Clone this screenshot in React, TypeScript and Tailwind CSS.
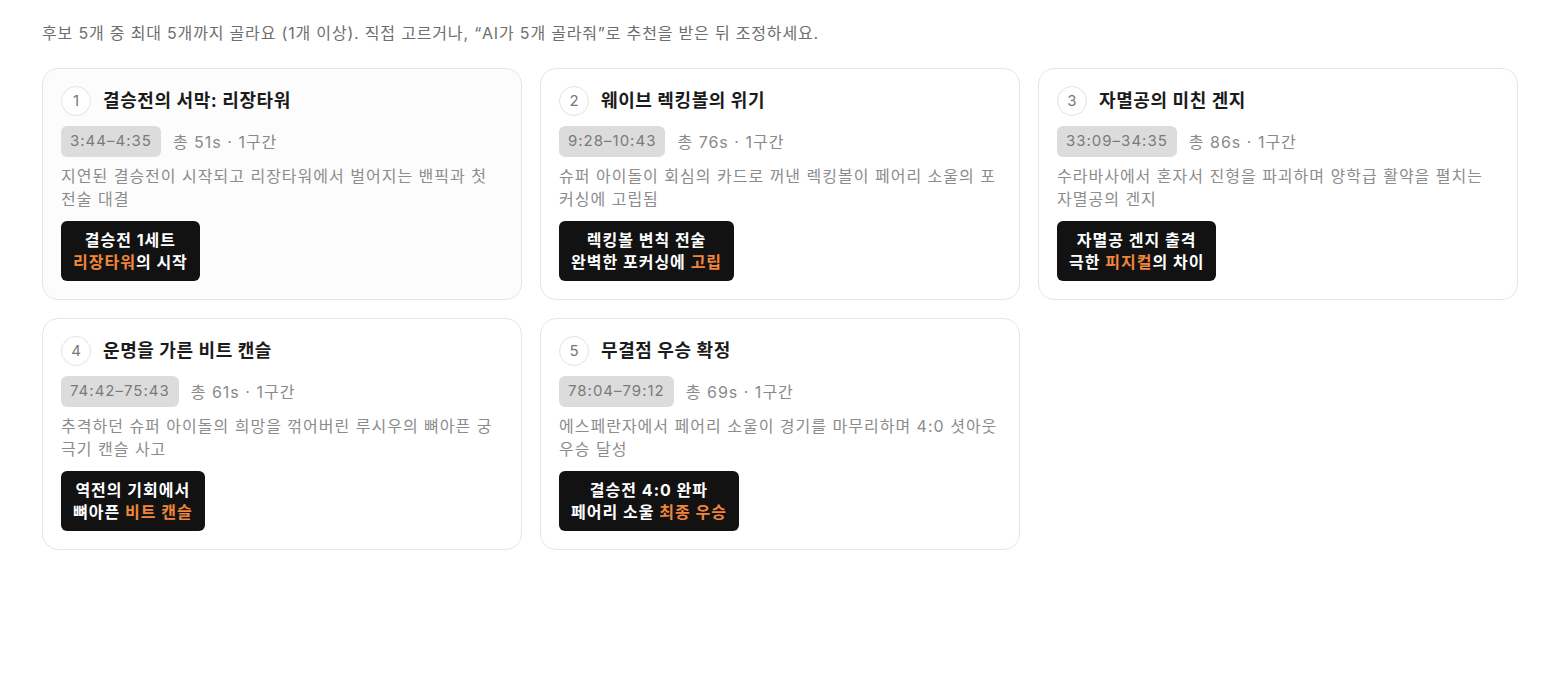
import React from "react";

type Item = {
  n: number;
  title: string;
  time: string;
  meta: string;
  desc: string;
  line1: React.ReactNode;
  line2: React.ReactNode;
  selected?: boolean;
};

const O = ({ children }: { children: React.ReactNode }) => (
  <span className="text-[#f0863c]">{children}</span>
);

const items: Item[] = [
  {
    n: 1,
    title: "결승전의 서막: 리장타워",
    time: "3:44–4:35",
    meta: "총 51s · 1구간",
    desc: "지연된 결승전이 시작되고 리장타워에서 벌어지는 밴픽과 첫 전술 대결",
    line1: "결승전 1세트",
    line2: (
      <>
        <O>리장타워</O>의 시작
      </>
    ),
    selected: true,
  },
  {
    n: 2,
    title: "웨이브 렉킹볼의 위기",
    time: "9:28–10:43",
    meta: "총 76s · 1구간",
    desc: "슈퍼 아이돌이 회심의 카드로 꺼낸 렉킹볼이 페어리 소울의 포커싱에 고립됨",
    line1: "렉킹볼 변칙 전술",
    line2: (
      <>
        완벽한 포커싱에 <O>고립</O>
      </>
    ),
  },
  {
    n: 3,
    title: "자멸공의 미친 겐지",
    time: "33:09–34:35",
    meta: "총 86s · 1구간",
    desc: "수라바사에서 혼자서 진형을 파괴하며 양학급 활약을 펼치는 자멸공의 겐지",
    line1: "자멸공 겐지 출격",
    line2: (
      <>
        극한 <O>피지컬</O>의 차이
      </>
    ),
  },
  {
    n: 4,
    title: "운명을 가른 비트 캔슬",
    time: "74:42–75:43",
    meta: "총 61s · 1구간",
    desc: "추격하던 슈퍼 아이돌의 희망을 꺾어버린 루시우의 뼈아픈 궁극기 캔슬 사고",
    line1: "역전의 기회에서",
    line2: (
      <>
        뼈아픈 <O>비트 캔슬</O>
      </>
    ),
  },
  {
    n: 5,
    title: "무결점 우승 확정",
    time: "78:04–79:12",
    meta: "총 69s · 1구간",
    desc: "에스페란자에서 페어리 소울이 경기를 마무리하며 4:0 셧아웃 우승 달성",
    line1: "결승전 4:0 완파",
    line2: (
      <>
        페어리 소울 <O>최종 우승</O>
      </>
    ),
  },
];

function Card({ it }: { it: Item }) {
  return (
    <div
      className={`rounded-[16px] border border-[#e6e6e6] pl-[18px] pr-[16px] pt-[17px] pb-[18px] ${
        it.selected ? "bg-[#fcfcfc]" : "bg-white"
      }`}
    >
      <div className="flex items-center gap-[12px] h-[30px]">
        <div className="w-[30px] h-[30px] rounded-full border border-[#e3e3e3] bg-white flex items-center justify-center text-[15px] text-[#777] shrink-0">
          {it.n}
        </div>
        <div className="text-[18px] font-bold text-[#1b1b1b] leading-[24px] tracking-[0.6px]">
          {it.title}
        </div>
      </div>
      <div className="flex items-center gap-[12px] mt-[10px]">
        <span className="rounded-[6px] bg-[#dcdcdc] px-[9px] h-[31px] flex items-center text-[15px] text-[#7a7a7a] tracking-[1px]">
          {it.time}
        </span>
        <span className="text-[16px] text-[#8a8a8a] tracking-[1px]">{it.meta}</span>
      </div>
      <p className="mt-[8px] text-[16px] leading-[23px] text-[#8c8c8c] tracking-[1px]">{it.desc}</p>
      <div className="mt-[10px] inline-flex flex-col items-center rounded-[6px] bg-[#121212] px-[12px] py-[8px] text-[16px] font-bold leading-[22px] text-white tracking-[1px]">
        <span>{it.line1}</span>
        <span>{it.line2}</span>
      </div>
    </div>
  );
}

export default function App() {
  return (
    <div
      className="min-h-screen bg-white pl-[42px] pr-[46px] pt-[21px]"
      style={{ fontFamily: 'Inter, "Noto Sans CJK KR", "Noto Sans", sans-serif' }}
    >
      <p className="text-[16px] leading-[24px] text-[#6e6e6e] tracking-[0.82px]">
        후보 5개 중 최대 5개까지 골라요 (1개 이상). 직접 고르거나, “AI가 5개 골라줘”로 추천을 받은 뒤 조정하세요.
      </p>
      <div className="mt-[23px] grid grid-cols-3 gap-[18px]">
        {items.map((it) => (
          <Card key={it.n} it={it} />
        ))}
      </div>
    </div>
  );
}
